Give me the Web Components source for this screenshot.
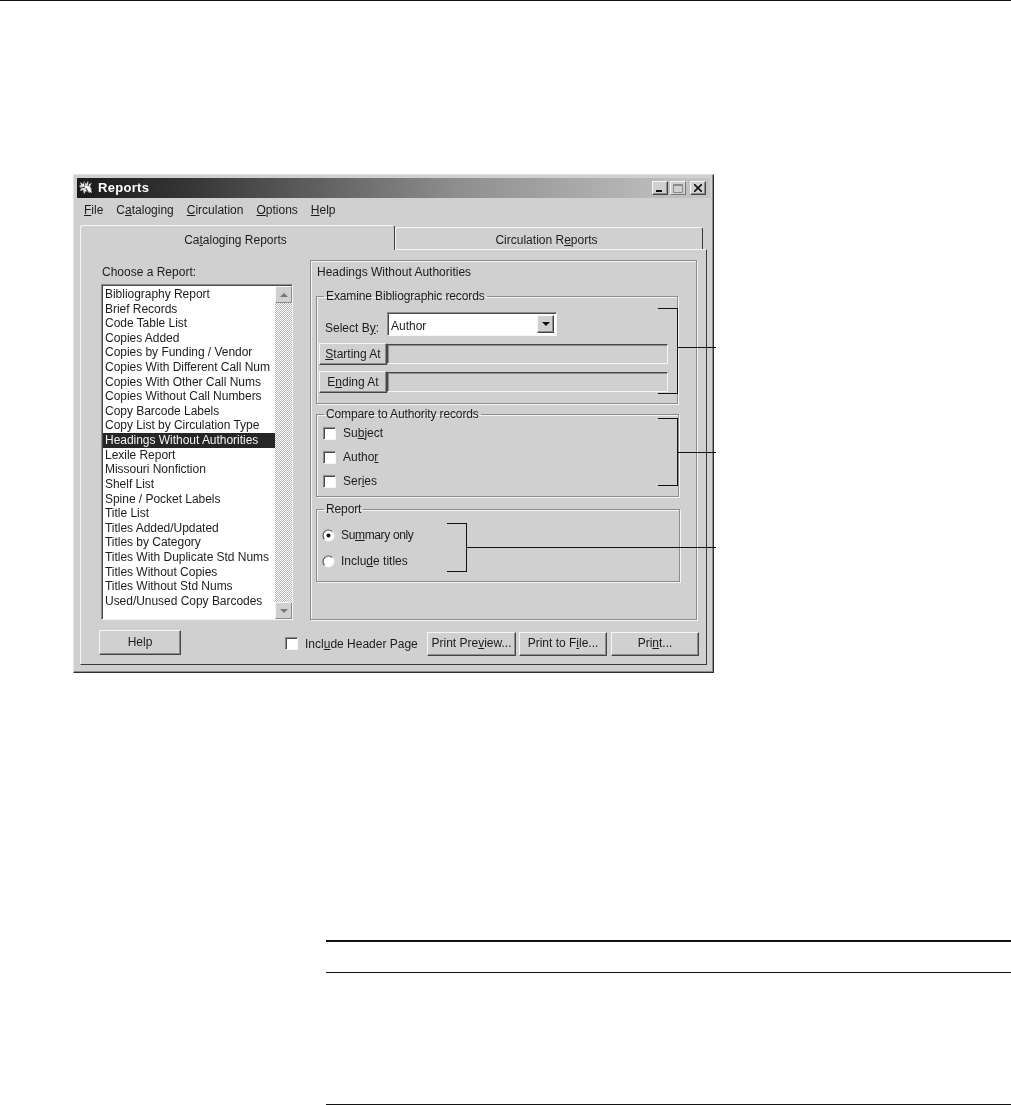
<!DOCTYPE html>
<html>
<head>
<meta charset="utf-8">
<title>Reports</title>
<style>
  html, body { margin: 0; background: #fff; }
  body { font: 12px/14px "Liberation Sans", Arial, sans-serif; color: #1c1c1c; }
</style>
</head>
<body>
<manual-page></manual-page>

<script>
const BEVEL = `
  --face: #d0d0d0;
  --light: #f6f6f6;
  --mid: #8c8c8c;
  --dark: #444;
`;

class WinButton extends HTMLElement {
  constructor() {
    super();
    this.attachShadow({ mode: "open" }).innerHTML = `
      <style>
        :host { ${BEVEL} display: flex; align-items: center; justify-content: center; box-sizing: border-box;
          background: var(--face); white-space: nowrap;
          border: 1px solid; border-color: var(--light) var(--dark) var(--dark) var(--light);
          box-shadow: inset -1px -1px 0 var(--mid); }
      </style>
      <slot></slot>`;
  }
}

class WinCheck extends HTMLElement {
  constructor() {
    super();
    this.attachShadow({ mode: "open" }).innerHTML = `
      <style>
        :host { ${BEVEL} display: flex; align-items: center; gap: 7px; white-space: nowrap; }
        i { display: block; box-sizing: border-box; width: 13px; height: 13px; background: #fff;
          border: 1px solid; border-color: var(--mid) var(--light) var(--light) var(--mid);
          box-shadow: inset 1px 1px 0 #4a4a4a; flex: none; }
      </style>
      <i></i><span><slot></slot></span>`;
  }
}

class WinRadio extends HTMLElement {
  constructor() {
    super();
    this.attachShadow({ mode: "open" }).innerHTML = `
      <style>
        :host { display: flex; align-items: center; gap: 6px; white-space: nowrap; }
        svg { flex: none; display: block; }
      </style>
      <svg width="13" height="13" viewBox="0 0 13 13">
        <circle cx="6.5" cy="6.5" r="5.5" fill="#fff"/>
        <path d="M2.6 10.4A5.5 5.5 0 0 1 10.4 2.6" fill="none" stroke="#555" stroke-width="1.2"/>
        <path d="M2.6 10.4A5.5 5.5 0 0 0 10.4 2.6" fill="none" stroke="#f4f4f4" stroke-width="1.2"/>
        ${this.hasAttribute("checked") ? '<circle cx="6.5" cy="6.5" r="2" fill="#111"/>' : ""}
      </svg>
      <span><slot></slot></span>`;
  }
}

class WinGroup extends HTMLElement {
  constructor() {
    super();
    this.attachShadow({ mode: "open" }).innerHTML = `
      <style>
        :host { display: block; box-sizing: border-box; }
        fieldset { box-sizing: border-box; height: 100%; margin: 0; padding: 0; min-width: 0;
          border: 1px solid #8c8c8c; box-shadow: 1px 1px 0 #f4f4f4, inset 1px 1px 0 #f4f4f4; }
        legend { margin-left: 7px; padding: 0 2px; line-height: 14px; letter-spacing: -.12px; }
      </style>
      <fieldset>
        <legend><slot name="legend"></slot></legend>
        <slot></slot>
      </fieldset>`;
  }
}

class WinSelect extends HTMLElement {
  constructor() {
    super();
    this.attachShadow({ mode: "open" }).innerHTML = `
      <style>
        :host { ${BEVEL} display: flex; box-sizing: border-box; background: #fff; align-items: center;
          border: 1px solid; border-color: var(--mid) var(--light) var(--light) var(--mid);
          box-shadow: inset 1px 1px 0 #4a4a4a; padding: 2px 2px 2px 3px; justify-content: space-between; }
        span { padding-top: 4px; }
        b { ${BEVEL} display: flex; align-items: center; justify-content: center; box-sizing: border-box;
          width: 17px; height: 18px; background: var(--face);
          border: 1px solid; border-color: var(--light) var(--dark) var(--dark) var(--light);
          box-shadow: inset -1px -1px 0 var(--mid); }
        b::after { content: ""; border: 4px solid transparent; border-top: 4px solid #111; border-bottom: 0; }
      </style>
      <span><slot></slot></span><b></b>`;
  }
}

class WinListbox extends HTMLElement {
  constructor() {
    super();
    const items = [
      "Bibliography Report", "Brief Records", "Code Table List", "Copies Added",
      "Copies by Funding / Vendor", "Copies With Different Call Num", "Copies With Other Call Nums",
      "Copies Without Call Numbers", "Copy Barcode Labels", "Copy List by Circulation Type",
      "Headings Without Authorities", "Lexile Report", "Missouri Nonfiction", "Shelf List",
      "Spine / Pocket Labels", "Title List", "Titles Added/Updated", "Titles by Category",
      "Titles With Duplicate Std Nums", "Titles Without Copies", "Titles Without Std Nums",
      "Used/Unused Copy Barcodes"
    ];
    const selected = this.getAttribute("selected");
    const rows = items.map((t) => `<li class="${t === selected ? "on" : ""}">${t}</li>`).join("");
    this.attachShadow({ mode: "open" }).innerHTML = `
      <style>
        :host { ${BEVEL} display: flex; box-sizing: border-box; background: #fff;
          border: 1px solid; border-color: var(--mid) var(--light) var(--light) var(--mid);
          box-shadow: inset 1px 1px 0 #4a4a4a; padding: 1px 0 0 1px; }
        ul { list-style: none; margin: 0; padding: 1px 0 0; flex: 1; min-width: 0; }
        li { height: 14.62px; line-height: 14.62px; padding-left: 2px; white-space: nowrap; letter-spacing: -.03px; }
        li.on { background: #262626; color: #f2f2f2; }
        .bar { width: 17px; flex: none; display: flex; flex-direction: column; justify-content: space-between;
          background: repeating-conic-gradient(#fff 0 25%, #b4b4b4 0 50%) 0 0 / 2px 2px; }
        .arrow { display: flex; align-items: center; justify-content: center; box-sizing: border-box;
          height: 17px; background: var(--face);
          border: 1px solid; border-color: var(--light) var(--mid) var(--mid) var(--light); }
        .up::after { content: ""; border: 4px solid transparent; border-bottom: 4px solid #777; border-top: 0; }
        .down::after { content: ""; border: 4px solid transparent; border-top: 4px solid #777; border-bottom: 0; }
      </style>
      <ul>${rows}</ul>
      <div class="bar"><div class="arrow up"></div><div class="arrow down"></div></div>`;
  }
}

class WinTitlebar extends HTMLElement {
  constructor() {
    super();
    const btn = (inner, cls) => `<span class="cap ${cls}">${inner}</span>`;
    this.attachShadow({ mode: "open" }).innerHTML = `
      <style>
        :host { ${BEVEL} display: flex; align-items: center; height: 20px; box-sizing: border-box;
          padding: 0 4px 0 2px; color: #fff; font-weight: bold; font-size: 13px; letter-spacing: .3px;
          background: linear-gradient(90deg, #1a1a1a 0, #3a3a3a 20%, #8e8e8e 60%, #c6c6c6 100%); }
        .logo { flex: none; margin-right: 3px; }
        .name { flex: 1; }
        .cap { display: flex; align-items: center; justify-content: center; box-sizing: border-box;
          width: 16px; height: 14px; background: var(--face); color: #111;
          border: 1px solid; border-color: var(--light) var(--dark) var(--dark) var(--light);
          box-shadow: inset -1px -1px 0 var(--mid); }
        .cap.max { border-color: var(--light) #777 #777 var(--light); box-shadow: none; margin-left: 2px; }
        .cap.close { margin-left: 4px; }
      </style>
      <svg class="logo" width="16" height="16" viewBox="0 0 16 16">
        <path d="M1 2l3 2 1-3 2 3 2-3 1 3 3-1-2 3 2 4-3-1 1 4-4-2-2 3-1-4-3 1 1-3-2-2 2-1z" fill="#d8d8d8"/>
        <path d="M3 4l8 8 2 1-1-3L6 4z" fill="#fff"/>
        <path d="M5 2l1 4M10 2L9 6M2 8l4-1M9 12l-2-4" stroke="#333" stroke-width="1" fill="none"/>
      </svg>
      <span class="name"><slot></slot></span>
      ${btn('<svg width="8" height="8"><rect x="0" y="6" width="6" height="2" fill="#111"/></svg>', "min")}
      ${btn('<svg width="10" height="9"><path d="M.5 .5h9v8h-9zM.5 1.5h9" fill="none" stroke="#8a8a8a"/></svg>', "max")}
      ${btn('<svg width="8" height="8"><path d="M0 0l8 8M8 0L0 8" stroke="#111" stroke-width="1.6"/></svg>', "close")}`;
  }
}

class CallOut extends HTMLElement {
  constructor() {
    super();
    this.attachShadow({ mode: "open" }).innerHTML = `
      <style>
        :host { position: absolute; box-sizing: border-box; display: block;
          border: solid #111; border-width: 1px 1px 1px 0; }
        i { position: absolute; height: 1px; background: #111; left: 100%;
          top: var(--stem-top); width: var(--stem-width); }
      </style>
      <i></i>`;
  }
}

class WinWindow extends HTMLElement {
  constructor() {
    super();
    this.attachShadow({ mode: "open" }).innerHTML = `
      <style>
        :host { ${BEVEL} display: block; box-sizing: border-box; position: relative;
          width: 641px; height: 499px; padding: 3px; background: var(--face);
          border: 1px solid; border-color: #e4e4e4 #2e2e2e #2e2e2e #e4e4e4;
          box-shadow: inset -1px -1px 0 var(--mid); filter: blur(.45px); }
        u { text-underline-offset: 1px; text-decoration-thickness: 1px; }

        .menu { display: flex; gap: 13px; height: 23px; align-items: center; padding: 0 0 0 7px; }
        .tabs { display: flex; margin: 4px 0 0 3px; height: 24px; align-items: flex-end; }
        .tab { box-sizing: border-box; display: flex; align-items: center; justify-content: center;
          border: 1px solid; border-bottom: 0; background: var(--face);
          border-color: var(--light) #3a3a3a var(--face) var(--light); border-radius: 3px 3px 0 0; }
        .tab.one { width: 315px; height: 25px; position: relative; z-index: 1; margin-bottom: -1px; padding: 3px 4px 0 0; }
        .tab.two { width: 308px; height: 22px; padding: 2px 5px 0 0; }

        .panel { box-sizing: border-box; width: 627px; height: 416px; margin-left: 3px; padding: 10px 0 0 20px;
          border: 1px solid; border-color: var(--light) #3a3a3a #3a3a3a var(--light); }
        .body { display: flex; gap: 17px; height: 360px; }
        .left { width: 192px; flex: none; display: flex; flex-direction: column; }
        .left > span { height: 24px; line-height: 25px; padding-left: 1px; }
        win-listbox { flex: 1; min-height: 0; }

        .report { width: 387px; flex: none; box-sizing: border-box; padding: 0 0 0 5px;
          border: 1px solid #8c8c8c; box-shadow: 1px 1px 0 #f4f4f4, inset 1px 1px 0 #f4f4f4; }
        .report > span { display: block; height: 28px; line-height: 22px; padding-left: 1px; }
        .g-examine { width: 362px; height: 115px; }
        .g-compare { width: 363px; height: 90px; margin-top: 3px; }
        .g-report { width: 364px; height: 80px; margin-top: 5px; }

        .row { display: flex; align-items: center; }
        .examine { padding: 9px 0 0 2px; }
        .by { width: 69px; padding: 8px 0 0 6px; box-sizing: border-box; }
        .examine win-select { width: 170px; height: 24px; margin-left: -1px; }
        .range { margin-top: 6px; }
        .range.first { margin-top: 7px; }
        .range win-button { width: 68px; height: 22px; }
        .field { box-sizing: border-box; width: 281px; height: 20px;
          border: 1px solid; border-color: #4a4a4a var(--light) var(--light) #4a4a4a;
          box-shadow: inset 1px 1px 0 var(--mid); }
        .checks { padding: 5px 0 0 6px; display: flex; flex-direction: column; gap: 10px; }
        .radios { padding: 12px 0 0 5px; display: flex; flex-direction: column; gap: 12px; }
        .tight { letter-spacing: -.35px; }

        .foot { display: flex; align-items: center; height: 23px; margin: 12px 0 0 -2px; }
        .foot win-button { padding-bottom: 2px; }
        .foot .help { width: 82px; height: 25px; align-self: flex-start; margin-top: -2px; }
        .foot win-check { margin-left: 104px; width: 142px; }
        .foot .p1 { width: 89px; height: 24px; }
        .foot .p2 { width: 88px; height: 24px; margin-left: 3px; }
        .foot .p3 { width: 88px; height: 24px; margin-left: 4px; }
      </style>

      <win-titlebar>Reports</win-titlebar>
      <div class="menu">
        <span><u>F</u>ile</span><span>C<u>a</u>taloging</span><span><u>C</u>irculation</span><span><u>O</u>ptions</span><span><u>H</u>elp</span>
      </div>

      <div class="tabs">
        <div class="tab one"><span>Ca<u>t</u>aloging Reports</span></div>
        <div class="tab two"><span>Circulation R<u>e</u>ports</span></div>
      </div>

      <div class="panel">
        <div class="body">
          <div class="left">
            <span>Choose a Report:</span>
            <win-listbox selected="Headings Without Authorities"></win-listbox>
          </div>
          <div class="report">
            <span>Headings Without Authorities</span>

            <win-group class="g-examine">
              <span slot="legend">Examine Bibliographic records</span>
              <div class="examine">
                <div class="row">
                  <span class="by">Select B<u>y</u>:</span>
                  <win-select>Author</win-select>
                </div>
                <div class="row range first">
                  <win-button><span><u>S</u>tarting At</span></win-button><div class="field"></div>
                </div>
                <div class="row range">
                  <win-button><span>E<u>n</u>ding At</span></win-button><div class="field"></div>
                </div>
              </div>
            </win-group>

            <win-group class="g-compare">
              <span slot="legend">Compare to Authority records</span>
              <div class="checks">
                <win-check>Su<u>b</u>ject</win-check>
                <win-check>Autho<u>r</u></win-check>
                <win-check>Ser<u>i</u>es</win-check>
              </div>
            </win-group>

            <win-group class="g-report">
              <span slot="legend">Report</span>
              <div class="radios">
                <win-radio checked><span class="tight">Su<u>m</u>mary only</span></win-radio>
                <win-radio>Inclu<u>d</u>e titles</win-radio>
              </div>
            </win-group>
          </div>
        </div>

        <div class="foot">
          <win-button class="help">Help</win-button>
          <win-check>Incl<u>u</u>de Header Page</win-check>
          <win-button class="p1"><span>Print Pre<u>v</u>iew...</span></win-button>
          <win-button class="p2"><span>Print to F<u>i</u>le...</span></win-button>
          <win-button class="p3"><span>Pri<u>n</u>t...</span></win-button>
        </div>
      </div>

      <slot></slot>`;
  }
}

class ManualPage extends HTMLElement {
  constructor() {
    super();
    this.attachShadow({ mode: "open" }).innerHTML = `
      <style>
        :host { display: block; height: 1105px; box-sizing: border-box; overflow: hidden; border-top: 1px solid #111; }
        win-window { margin: 173px 0 0 73px; }
        .rules { margin: 267px 0 0 326px; }
        .rules div { background: #111; }
        .r1 { height: 2px; }
        .r2 { height: 1px; margin-top: 30px; }
        .r3 { height: 1px; margin-top: 131px; }
        /* callout offsets are relative to the window's padding box (74, 175) */
        .c1 { left: 584px; top: 133px; width: 20px; height: 86px; --stem-top: 38px; --stem-width: 39px; }
        .c2 { left: 584px; top: 243px; width: 20px; height: 68px; --stem-top: 33px; --stem-width: 39px; }
        .c3 { left: 373px; top: 348px; width: 20px; height: 49px; --stem-top: 23px; --stem-width: 250px; }
      </style>
      <win-window>
        <call-out class="c1"></call-out>
        <call-out class="c2"></call-out>
        <call-out class="c3"></call-out>
      </win-window>
      <div class="rules">
        <div class="r1"></div>
        <div class="r2"></div>
        <div class="r3"></div>
      </div>`;
  }
}

customElements.define("win-button", WinButton);
customElements.define("win-check", WinCheck);
customElements.define("win-radio", WinRadio);
customElements.define("win-group", WinGroup);
customElements.define("win-select", WinSelect);
customElements.define("win-listbox", WinListbox);
customElements.define("win-titlebar", WinTitlebar);
customElements.define("call-out", CallOut);
customElements.define("win-window", WinWindow);
customElements.define("manual-page", ManualPage);
</script>
</body>
</html>
